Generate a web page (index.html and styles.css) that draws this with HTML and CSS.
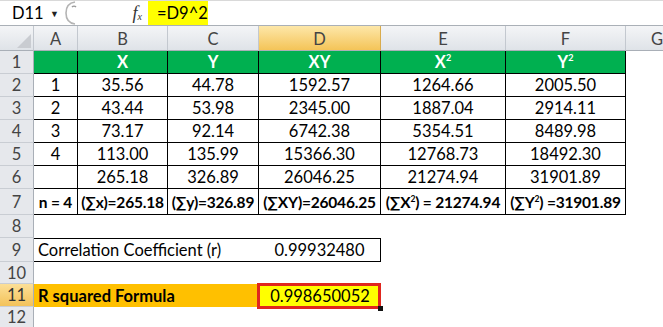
FILE: index.html
```html
<!DOCTYPE html>
<html lang="en">
<head>
    <meta charset="UTF-8">
    <title>R squared Formula</title>
    <link rel="stylesheet" href="styles.css">
</head>
<body>
    <div class="formula-bar">
        <div class="name-box">
            <span>D11</span>
            <span class="arrow">&#9660;</span>
        </div>
        <svg class="splitter" width="18" height="24" viewBox="0 0 18 24">
            <path d="M11 1 C4 2 2 7 2 12 C2 17 4 22 11 23" fill="none" stroke="#b4b4b4" stroke-width="1.6"/>
            <path d="M8 6 C9 5 11 5 12 6" fill="none" stroke="#9a9a9a" stroke-width="1.6"/>
        </svg>
        <div class="fx-area"><span class="fx">f<sub>x</sub></span></div>
        <div class="formula"><span class="formula-value">=D9^2</span></div>
    </div>

    <div class="sheet">
        <!-- column headers -->
        <div class="cell ch corner">
            <svg width="14" height="14" viewBox="0 0 14 14"><polygon points="14,0 14,14 0,14" fill="#c9ccd1"/></svg>
        </div>
        <div class="cell ch">A</div>
        <div class="cell ch">B</div>
        <div class="cell ch">C</div>
        <div class="cell ch sel">D</div>
        <div class="cell ch">E</div>
        <div class="cell ch">F</div>
        <div class="cell ch last">G</div>

        <div class="cell rh">1</div>
        <div class="cell bx green"></div>
        <div class="cell bx green">X</div>
        <div class="cell bx green">Y</div>
        <div class="cell bx green">XY</div>
        <div class="cell bx green"><span>X<sup>2</sup></span></div>
        <div class="cell bx green"><span>Y<sup>2</sup></span></div>

        <div class="cell rh">2</div>
        <div class="cell bx">1</div>
        <div class="cell bx">35.56</div>
        <div class="cell bx">44.78</div>
        <div class="cell bx">1592.57</div>
        <div class="cell bx">1264.66</div>
        <div class="cell bx">2005.50</div>

        <div class="cell rh">3</div>
        <div class="cell bx">2</div>
        <div class="cell bx">43.44</div>
        <div class="cell bx">53.98</div>
        <div class="cell bx">2345.00</div>
        <div class="cell bx">1887.04</div>
        <div class="cell bx">2914.11</div>

        <div class="cell rh">4</div>
        <div class="cell bx">3</div>
        <div class="cell bx">73.17</div>
        <div class="cell bx">92.14</div>
        <div class="cell bx">6742.38</div>
        <div class="cell bx">5354.51</div>
        <div class="cell bx">8489.98</div>

        <div class="cell rh">5</div>
        <div class="cell bx">4</div>
        <div class="cell bx">113.00</div>
        <div class="cell bx">135.99</div>
        <div class="cell bx">15366.30</div>
        <div class="cell bx">12768.73</div>
        <div class="cell bx">18492.30</div>

        <div class="cell rh">6</div>
        <div class="cell bx"></div>
        <div class="cell bx">265.18</div>
        <div class="cell bx">326.89</div>
        <div class="cell bx">26046.25</div>
        <div class="cell bx">21274.94</div>
        <div class="cell bx">31901.89</div>

        <div class="cell rh">7</div>
        <div class="cell bx sum">n = 4</div>
        <div class="cell bx sum">(∑x)=265.18</div>
        <div class="cell bx sum">(∑y)=326.89</div>
        <div class="cell bx sum">(∑XY)=26046.25</div>
        <div class="cell bx sum"><span>(∑X<sup>2</sup>) = 21274.94</span></div>
        <div class="cell bx sum"><span>(∑Y<sup>2</sup>) =31901.89</span></div>

        <div class="cell rh">8</div>

        <div class="cell rh">9</div>
        <div class="cell merged label">Correlation Coefficient (r)</div>
        <div class="cell boxed">0.99932480</div>

        <div class="cell rh">10</div>

        <div class="cell rh sel">11</div>
        <div class="cell merged orange bold">R squared Formula</div>
        <div class="cell active">0.998650052</div>

        <div class="cell rh">12</div>
    </div>
</body>
</html>
```

FILE: styles.css
```css
body {
    margin: 0;
    width: 663px;
    height: 327px;
    overflow: hidden;
    background: #fff;
    color: #000;
    font-family: Lato, "Liberation Sans", sans-serif;
    font-size: 16.5px;
}

/* formula bar */
.formula-bar {
    display: flex;
    height: 26px;
    box-sizing: border-box;
    border-top: 1px solid #d9d9d9;
    border-bottom: 1px solid #aab0b7;
}
.name-box {
    width: 64px;
    box-sizing: border-box;
    padding-left: 12px;
    display: flex;
    align-items: center;
}
.name-box .arrow {
    margin-left: auto;
    margin-right: 5px;
    font-size: 9px;
    color: #222;
}
.fx-area {
    width: 66px;
    display: flex;
    align-items: center;
    justify-content: flex-end;
    padding-right: 6px;
    box-sizing: border-box;
}
.fx {
    font-family: "Liberation Serif", serif;
    font-style: italic;
    font-size: 18px;
    color: #333;
}
.fx sub {
    font-size: 10px;
    vertical-align: -1px;
}
.formula {
    flex: 1;
    display: flex;
}
.formula-value {
    width: 60px;
    padding-left: 9px;
    box-sizing: border-box;
    background: #ffff00;
    display: flex;
    align-items: center;
}

/* spreadsheet grid */
.sheet {
    display: grid;
    grid-template-columns: 34px 44px 90px 91px 122px 125px 120px 1fr;
    grid-template-rows: 25px repeat(6, 23px) 26px 23px 24px 22px 23px 1fr;
    height: 301px;
}
.cell {
    box-sizing: border-box;
    display: flex;
    align-items: center;
    justify-content: center;
    white-space: nowrap;
}
.cell sup {
    font-size: 0.55em;
    line-height: 0;
    vertical-align: 0.75em;
}
.ch {
    background: linear-gradient(#f4f5f7, #dfe3e8);
    border-right: 1px solid #c3c8cf;
    border-bottom: 1px solid #a9afb7;
    color: #444;
    padding-top: 2px;
}
.ch.sel {
    background: linear-gradient(#fde7a9, #f4c458);
    border-right-color: #d9ab4c;
}
.ch.last {
    border-right: none;
    justify-content: flex-end;
    padding-right: 0;
}
.corner {
    align-items: flex-end;
    justify-content: flex-end;
    padding: 0 2px 2px 0;
}
.rh {
    grid-column: 1;
    background: #e6e8ec;
    border-right: 1px solid #a9afb7;
    border-bottom: 1px solid #c9cdd3;
    color: #444;
}
.rh.sel {
    background: linear-gradient(#fcdf97, #f3c25a);
    color: #333;
}
.bx {
    border-right: 1px solid #000;
    border-bottom: 1px solid #000;
}
.green {
    background: #00b050;
    color: #fff;
    font-weight: 700;
}
.bold {
    font-weight: 700;
}
.sum {
    font-weight: 700;
    font-size: 15.5px;
    letter-spacing: -0.2px;
}
.merged {
    grid-column: span 3;
}
.label {
    justify-content: flex-start;
    padding-left: 4px;
    border-top: 1px solid #000;
    border-bottom: 1px solid #000;
}
.boxed {
    border: 1px solid #000;
    border-left: none;
}
.orange {
    background: #ffc000;
    justify-content: flex-start;
    padding-left: 4px;
}
.active {
    position: relative;
    background: #ffff00;
}
.active::after {
    content: "";
    position: absolute;
    left: -2px;
    top: -1px;
    right: 0;
    bottom: -2px;
    border: 3px solid #e0261e;
}
.active::before {
    content: "";
    position: absolute;
    right: -2px;
    bottom: -4px;
    width: 5px;
    height: 5px;
    background: #111;
    z-index: 1;
}
```
